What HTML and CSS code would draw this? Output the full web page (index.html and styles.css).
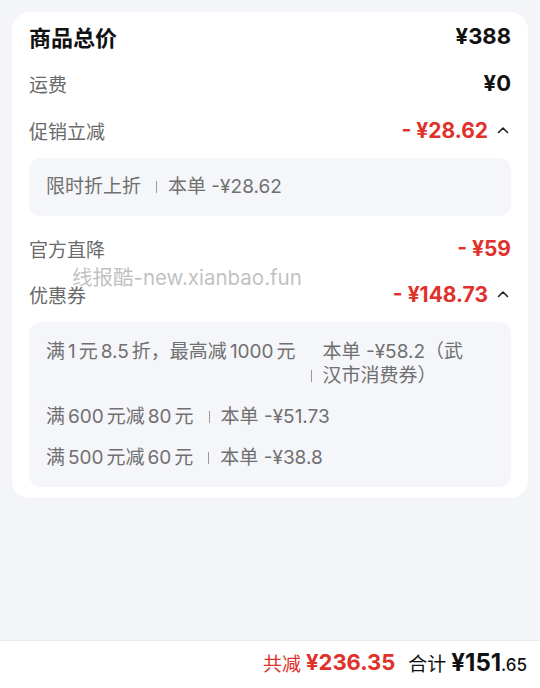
FILE: index.html
```html
<!DOCTYPE html>
<html lang="zh">
<head>
<meta charset="utf-8">
<link rel="stylesheet" href="styles.css">
</head>
<body>
<div class="page">
  <div class="card">
    <div class="row title-row">
      <span class="label-main">商品总价</span>
      <span class="val big">¥388</span>
    </div>
    <div class="row r2">
      <span class="label">运费</span>
      <span class="val big">¥0</span>
    </div>
    <div class="row r2">
      <span class="label">促销立减</span>
      <span class="val red">- ¥28.62<svg class="chev" viewBox="0 0 12 8" width="12" height="8"><polyline points="1.5,6.5 6,2 10.5,6.5" fill="none" stroke="#222" stroke-width="1.6" stroke-linecap="round" stroke-linejoin="round"/></svg></span>
    </div>
    <div class="box b1">
      <div class="item"><span class="desc">限时折上折</span><span class="sep"></span><span class="amt">本单 -¥28.62</span></div>
    </div>
    <div class="row r4">
      <span class="label">官方直降</span>
      <span class="val red">- ¥59</span>
    </div>
    <div class="row r5">
      <span class="label">优惠券</span>
      <span class="val red">- ¥148.73<svg class="chev" viewBox="0 0 12 8" width="12" height="8"><polyline points="1.5,6.5 6,2 10.5,6.5" fill="none" stroke="#222" stroke-width="1.6" stroke-linecap="round" stroke-linejoin="round"/></svg></span>
      <span class="watermark">线报酷-new.xianbao.fun</span>
    </div>
    <div class="box b2">
      <div class="item"><span class="desc">满<span class="n">1</span>元<span class="n">8.5</span>折，最高减<span class="n">1000</span>元</span><span class="sep low"></span><span class="amt wrap">本单 -¥58.2（武汉市消费券）</span></div>
      <div class="item"><span class="desc">满<span class="n">600</span>元减<span class="n">80</span>元</span><span class="sep"></span><span class="amt">本单 -¥51.73</span></div>
      <div class="item"><span class="desc">满<span class="n">500</span>元减<span class="n">60</span>元</span><span class="sep"></span><span class="amt">本单 -¥38.8</span></div>
    </div>
  </div>
</div>
<div class="bottom">
  <span class="save-label">共减</span>
  <span class="save-val">¥236.35</span>
  <span class="total-label">合计</span>
  <span class="total-val">¥151<small>.65</small></span>
</div>
</body>
</html>
```
FILE: styles.css
```css
* { box-sizing: border-box; }
html, body { margin: 0; padding: 0; }
body {
  width: 540px;
  height: 688px;
  background: #f4f5f8;
  font-family: "Inter", "Noto Sans CJK SC", sans-serif;
  color: #1a1a1a;
  display: flex;
  flex-direction: column;
  overflow: hidden;
}
.page {
  flex: 1;
  padding: 12px 12px 0;
}
.card {
  background: #fff;
  border-radius: 18px;
  padding: 12px 17px 11px;
}
.row {
  display: flex;
  justify-content: space-between;
  align-items: center;
  height: 28px;
  padding-bottom: 4px;
  position: relative;
}
.r2 { margin-top: 19px; }
.r4 { margin-top: 20px; }
.r5 { margin-top: 18px; }
.label-main {
  font-size: 22px;
  font-weight: 700;
  color: #111;
}
.label {
  font-size: 19px;
  color: #6a6a6a;
}
.val {
  font-size: 21px;
  font-weight: 700;
  color: #111;
  display: flex;
  align-items: center;
}
.val.big { font-size: 22px; }
.val.red { color: #e0312a; }
.chev {
  margin-left: 9px;
  margin-right: 2px;
}
.watermark {
  position: absolute;
  left: 43px;
  top: -21px;
  font-size: 20.5px;
  color: rgba(150, 150, 150, 0.6);
  white-space: nowrap;
  pointer-events: none;
}
.box {
  background: #f5f6f9;
  border-radius: 12px;
  padding: 17px 17px;
  display: flex;
  flex-direction: column;
  gap: 17px;
}
.b1 { margin-top: 12px; }
.b2 { margin-top: 12px; padding-top: 18px; }
.item {
  display: flex;
  align-items: flex-start;
  font-size: 19px;
  line-height: 24px;
  color: #707070;
}
.n { margin: 0 3px; }
.desc { white-space: nowrap; }
.sep {
  width: 1px;
  height: 12px;
  background: #9a9a9a;
  margin: 6px 11px 0 15px;
  flex: none;
}
.sep.low { align-self: flex-end; margin-bottom: 6px; }
.amt { white-space: nowrap; }
.amt.wrap { white-space: normal; flex: 1; padding-right: 18px; }
.bottom {
  height: 48px;
  background: #fff;
  border-top: 1px solid #e8e9ec;
  display: flex;
  justify-content: flex-end;
  align-items: center;
  padding-right: 13px;
  padding-bottom: 5px;
}
.save-label {
  color: #e0312a;
  font-size: 19px;
  margin-right: 5px;
}
.save-val {
  color: #e0312a;
  font-size: 22px;
  font-weight: 700;
  margin-right: 13px;
}
.total-label {
  font-size: 19px;
  color: #111;
  margin-right: 5px;
}
.total-val {
  font-size: 24px;
  font-weight: 700;
  color: #111;
}
.total-val small {
  font-size: 17px;
  font-weight: 500;
}
```
